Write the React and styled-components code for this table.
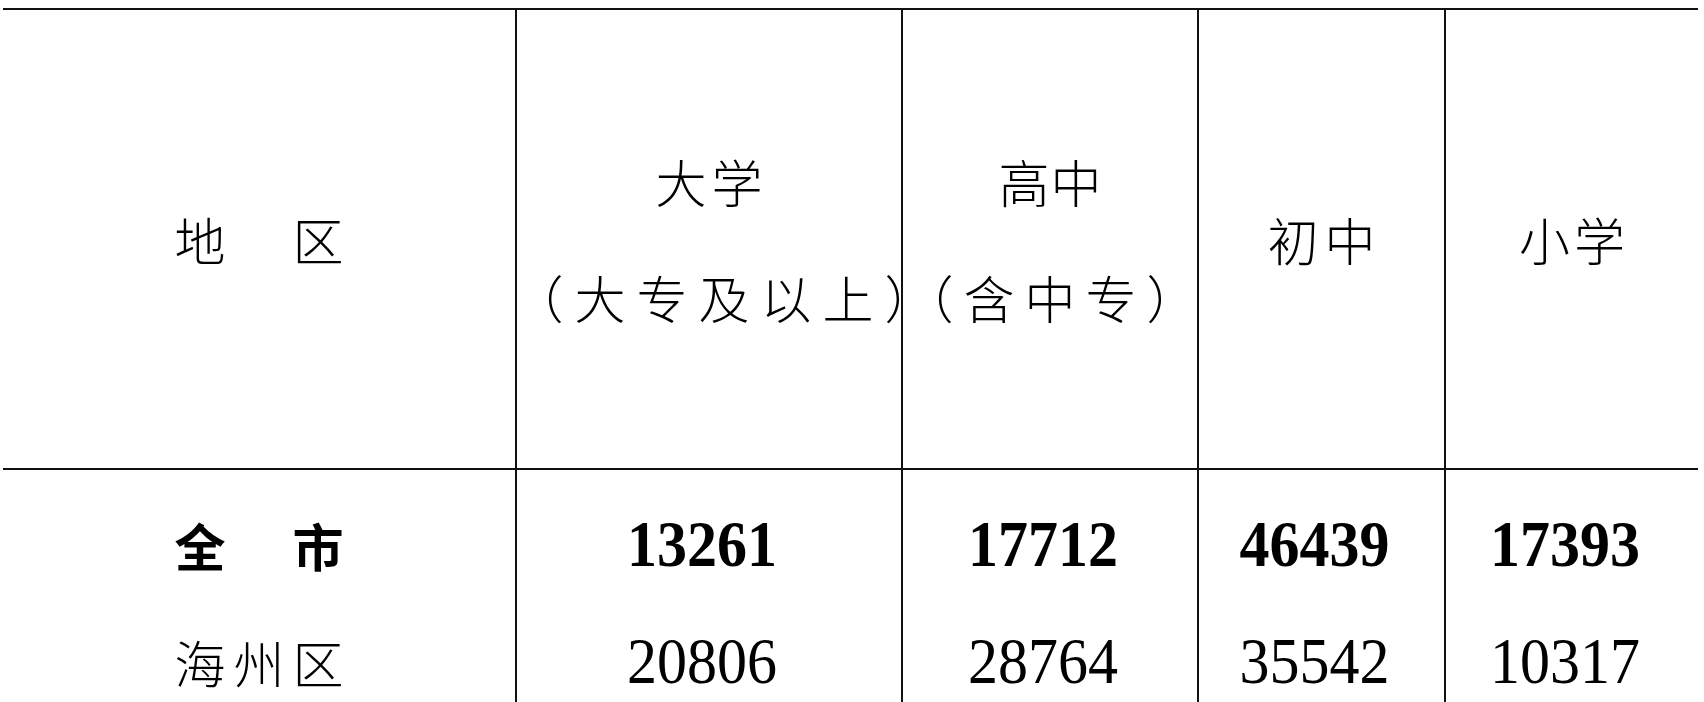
import React from "react";
import styled, { createGlobalStyle } from "styled-components";

const GlobalStyle = createGlobalStyle`
  html, body {
    margin: 0;
    padding: 0;
    background: #ffffff;
    overflow: hidden;
  }
  body {
    font-family: "Noto Sans CJK SC", "Liberation Serif", serif;
    color: #000;
  }
`;

const Sheet = styled.div`
  margin: 8px 0 0 3px;
  width: 1695px;
  height: 694px;
  overflow: hidden;
  border-top: 2px solid #111;
`;

const Grid = styled.div`
  display: grid;
  grid-template-columns: 512px 386px 296px 247px 254px;
`;

const HeadCell = styled.div`
  height: 458px;
  border-bottom: 2px solid #111;
  border-left: ${(p) => (p.$first ? "none" : "2px solid #111")};
  display: flex;
  flex-direction: column;
  align-items: center;
  justify-content: center;
  overflow: visible;
  min-width: 0;
`;

const HeadLine = styled.div`
  font-family: "Noto Sans CJK SC", sans-serif;
  font-size: 51px;
  font-weight: 300;
  line-height: 116px;
  white-space: nowrap;
  font-feature-settings: ${(p) => (p.$half ? '"halt"' : "normal")};
  letter-spacing: ${(p) => p.$ls || 0}px;
  margin-right: ${(p) => -(p.$ls || 0)}px;
  margin-left: ${(p) => p.$shift || 0}px;
`;

const BodyCell = styled.div`
  border-left: ${(p) => (p.$first ? "none" : "2px solid #111")};
  height: ${(p) => p.$h}px;
  padding-top: ${(p) => p.$pt || 0}px;
  display: flex;
  align-items: center;
  justify-content: center;
  min-width: 0;
`;

const Region = styled.span`
  font-family: "Noto Sans CJK SC", sans-serif;
  font-size: 51px;
  font-weight: ${(p) => (p.$bold ? 700 : 300)};
  letter-spacing: 8px;
  margin-right: -8px;
  white-space: nowrap;
`;

const Num = styled.span`
  font-family: "Liberation Serif", "Times New Roman", serif;
  font-size: 60px;
  font-weight: ${(p) => (p.$bold ? 700 : 400)};
  padding-right: 14px;
  display: inline-block;
  transform: scaleY(1.08);
`;

const headers = [
  { lines: [{ t: "地　区", ls: 8 }] },
  { lines: [{ t: "大学", ls: 5 }, { t: "（大专及以上）", ls: 11, half: true, shift: 30 }] },
  { lines: [{ t: "高中", ls: 1 }, { t: "（含中专）", ls: 10, half: true }] },
  { lines: [{ t: "初中", ls: 6 }] },
  { lines: [{ t: "小学", ls: 4 }] },
];

const rows = [
  { name: "全　市", bold: true, values: ["13261", "17712", "46439", "17393"] },
  { name: "海州区", bold: false, values: ["20806", "28764", "35542", "10317"] },
  { name: "", bold: false, values: ["", "", "", ""] },
];

export default function App() {
  return (
    <>
      <GlobalStyle />
      <Sheet>
        <Grid>
          {headers.map((h, i) => (
            <HeadCell key={i} $first={i === 0}>
              {h.lines.map((l, j) => (
                <HeadLine key={j} $ls={l.ls} $shift={l.shift} $half={l.half}>
                  {l.t}
                </HeadLine>
              ))}
            </HeadCell>
          ))}
          {rows.map((r, ri) => (
            <React.Fragment key={ri}>
              <BodyCell $first $h={117} $pt={ri === 0 ? 16 : 0}>
                <Region $bold={r.bold}>{r.name}</Region>
              </BodyCell>
              {r.values.map((v, vi) => (
                <BodyCell key={vi} $h={117} $pt={ri === 0 ? 16 : 0}>
                  <Num $bold={r.bold}>{v}</Num>
                </BodyCell>
              ))}
            </React.Fragment>
          ))}
        </Grid>
      </Sheet>
    </>
  );
}
